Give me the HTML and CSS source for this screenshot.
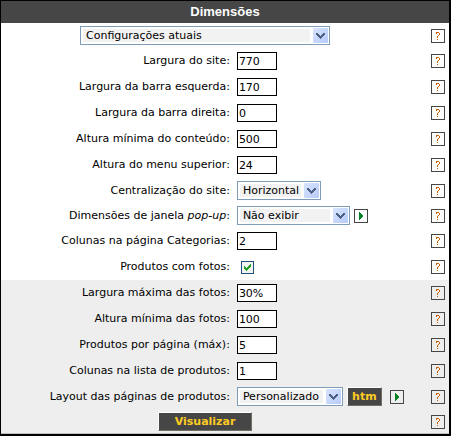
FILE: index.html
```html
<!DOCTYPE html>
<html lang="pt-BR">
<head>
<meta charset="utf-8">
<title>Dimensões</title>
<link rel="stylesheet" href="styles.css">
</head>
<body>
<svg class="defs" aria-hidden="true">
  <symbol id="chevron" viewBox="0 0 15 15"><path d="M3 5h2v1h1v1h1v1h1v-1h1v-1h1v-1h2v2h-1v1h-1v1h-1v1h-1v1h-1v-1h-1v-1h-1v-1h-1v-1h-1z" fill="#4d6185"/></symbol>
  <symbol id="play" viewBox="0 0 12 12"><path d="M4 2h1v1h1v1h1v1h1v2h-1v1h-1v1h-1v1h-1z" fill="#008020"/></symbol>
  <symbol id="help" viewBox="0 0 12 12"><path d="M4 2h3v1h-3zM4 3h1v1h-1zM7 3h1v2h-1zM6 5h1v1h-1zM5 6h1v2h-1zM5 9h1v1h-1z" fill="#cc6000"/></symbol>
</svg>
<form class="panel">
  <h1 class="title">Dimensões</h1>

  <div class="row row-short">
    <div class="center"><span class="select select-wide"><select aria-label="Configurações"><option>Configurações atuais</option></select><svg><use href="#chevron"/></svg></span></div>
    <button type="button" class="icon" aria-label="Ajuda"><svg><use href="#help"/></svg></button>
  </div>
  <div class="row">
    <label for="site">Largura do site:</label>
    <div class="field"><input class="text" id="site" value="770"></div>
    <button type="button" class="icon" aria-label="Ajuda"><svg><use href="#help"/></svg></button>
  </div>
  <div class="row">
    <label for="left">Largura da barra esquerda:</label>
    <div class="field"><input class="text" id="left" value="170"></div>
    <button type="button" class="icon" aria-label="Ajuda"><svg><use href="#help"/></svg></button>
  </div>
  <div class="row">
    <label for="right">Largura da barra direita:</label>
    <div class="field"><input class="text" id="right" value="0"></div>
    <button type="button" class="icon" aria-label="Ajuda"><svg><use href="#help"/></svg></button>
  </div>
  <div class="row">
    <label for="content">Altura mínima do conteúdo:</label>
    <div class="field"><input class="text" id="content" value="500"></div>
    <button type="button" class="icon" aria-label="Ajuda"><svg><use href="#help"/></svg></button>
  </div>
  <div class="row">
    <label for="menu">Altura do menu superior:</label>
    <div class="field"><input class="text" id="menu" value="24"></div>
    <button type="button" class="icon" aria-label="Ajuda"><svg><use href="#help"/></svg></button>
  </div>
  <div class="row row-short">
    <label for="align">Centralização do site:</label>
    <div class="field"><span class="select select-small"><select id="align"><option>Horizontal</option></select><svg><use href="#chevron"/></svg></span></div>
    <button type="button" class="icon" aria-label="Ajuda"><svg><use href="#help"/></svg></button>
  </div>
  <div class="row row-short">
    <label for="popup">Dimensões de janela <i>pop-up</i>:</label>
    <div class="field"><span class="select select-large"><select id="popup"><option>Não exibir</option></select><svg><use href="#chevron"/></svg></span><button type="button" class="icon" aria-label="Abrir"><svg><use href="#play"/></svg></button></div>
    <button type="button" class="icon" aria-label="Ajuda"><svg><use href="#help"/></svg></button>
  </div>
  <div class="row">
    <label for="catcols">Colunas na página Categorias:</label>
    <div class="field"><input class="text" id="catcols" value="2"></div>
    <button type="button" class="icon" aria-label="Ajuda"><svg><use href="#help"/></svg></button>
  </div>
  <div class="row">
    <label for="photos">Produtos com fotos:</label>
    <div class="field"><span class="check"><input type="checkbox" id="photos" checked><svg viewBox="0 0 11 11"><path d="M2 4h1v1h1v1h1v-1h1v-1h1v-1h1v-1h1v3h-1v1h-1v1h-1v1h-1v1h-1v-1h-1v-1h-1z" fill="#21a121"/></svg></span></div>
    <button type="button" class="icon" aria-label="Ajuda"><svg><use href="#help"/></svg></button>
  </div>

  <div class="shaded">
    <div class="row">
      <label for="maxw">Largura máxima das fotos:</label>
      <div class="field"><input class="text" id="maxw" value="30%"></div>
      <button type="button" class="icon" aria-label="Ajuda"><svg><use href="#help"/></svg></button>
    </div>
    <div class="row">
      <label for="minh">Altura mínima das fotos:</label>
      <div class="field"><input class="text" id="minh" value="100"></div>
      <button type="button" class="icon" aria-label="Ajuda"><svg><use href="#help"/></svg></button>
    </div>
    <div class="row">
      <label for="perpage">Produtos por página (máx):</label>
      <div class="field"><input class="text" id="perpage" value="5"></div>
      <button type="button" class="icon" aria-label="Ajuda"><svg><use href="#help"/></svg></button>
    </div>
    <div class="row">
      <label for="listcols">Colunas na lista de produtos:</label>
      <div class="field"><input class="text" id="listcols" value="1"></div>
      <button type="button" class="icon" aria-label="Ajuda"><svg><use href="#help"/></svg></button>
    </div>
    <div class="row row-short">
      <label for="layout">Layout das páginas de produtos:</label>
      <div class="field"><span class="select select-medium"><select id="layout"><option>Personalizado</option></select><svg><use href="#chevron"/></svg></span><button type="button" class="action action-small">htm</button><button type="button" class="icon" aria-label="Abrir"><svg><use href="#play"/></svg></button></div>
      <button type="button" class="icon" aria-label="Ajuda"><svg><use href="#help"/></svg></button>
    </div>
    <div class="row row-short">
      <div class="center"><button type="button" class="action action-wide">Visualizar</button></div>
      <button type="button" class="icon" aria-label="Ajuda"><svg><use href="#help"/></svg></button>
    </div>
  </div>
</form>
</body>
</html>
```
FILE: styles.css
```css
* { box-sizing: border-box; }

body {
  margin: 0;
  background: #fff;
  color: #000;
  font: 11px/14px Verdana, "DejaVu Sans", sans-serif;
}

input, select, button { font: inherit; color: inherit; margin: 0; }

svg { shape-rendering: crispEdges; }

.defs { position: absolute; width: 0; height: 0; }

.panel {
  border: solid #000;
  border-width: 1px 2px 2px 1px;
}

.title {
  margin: 0;
  background: #464646;
  color: #fff;
  font: bold 13px/22px Arial, "Liberation Sans", sans-serif;
  text-align: center;
}

.row {
  display: grid;
  grid-template-columns: 23fr 18fr 36px;
  align-items: center;
  height: 26px;
  padding-right: 4px;
}

.row-short { height: 25px; }

.shaded {
  background: #eee;
  box-shadow: inset 0 -1px #c0c0c0;
}

.row > label { text-align: right; white-space: nowrap; }

.row > .icon { justify-self: end; }

.center {
  grid-column: span 2;
  display: flex;
  justify-content: center;
}

.field {
  display: flex;
  align-items: center;
  gap: 4px;
  min-width: 0;
  padding-left: 7px;
}

.text {
  width: 40px;
  height: 18px;
  padding: 0 1px;
  border: 1px solid #000;
  border-radius: 0;
  background: #fff;
}

.select {
  display: inline-grid;
  position: relative;
  height: 19px;
}

.select select {
  appearance: none;
  width: 100%;
  height: 19px;
  padding: 2px 19px 2px 2px;
  border: 1px solid #7f9db9;
  border-radius: 0;
  background: linear-gradient(#f2f2f2, #f2f2f2) content-box, #fff;
  line-height: 13px;
  text-indent: 3px;
}

.select svg {
  position: absolute;
  top: 2px;
  right: 2px;
  width: 15px;
  height: 15px;
  border-radius: 1px;
  background: linear-gradient(135deg, #d8e4fe, #b7cbfa);
  pointer-events: none;
}

.select-wide { width: 250px; }
.select-large { width: 113px; }
.select-medium { width: 106px; }
.select-small { width: 84px; }

.icon {
  flex: none;
  width: 14px;
  height: 14px;
  padding: 0;
  border: 1px solid #464646;
  background: transparent;
}

.icon svg { display: block; width: 12px; height: 12px; }

.check {
  position: relative;
  width: 13px;
  height: 13px;
  margin-left: 4px;
}

.check input {
  appearance: none;
  display: block;
  width: 13px;
  height: 13px;
  border: 1px solid #1c5180;
  background: #f3f3ef;
}

.check svg {
  position: absolute;
  inset: 1px;
  width: 11px;
  height: 11px;
  pointer-events: none;
}

.check input:not(:checked) + svg { display: none; }

.action {
  height: 19px;
  padding: 0;
  border: 1px solid;
  border-color: #fff #716f64 #716f64 #fff;
  background: #464646;
  color: #fc2;
  font-weight: bold;
}

.action-small { width: 35px; }
.action-wide { width: 94px; }

.action-small + .icon { margin-left: 4px; }
```
